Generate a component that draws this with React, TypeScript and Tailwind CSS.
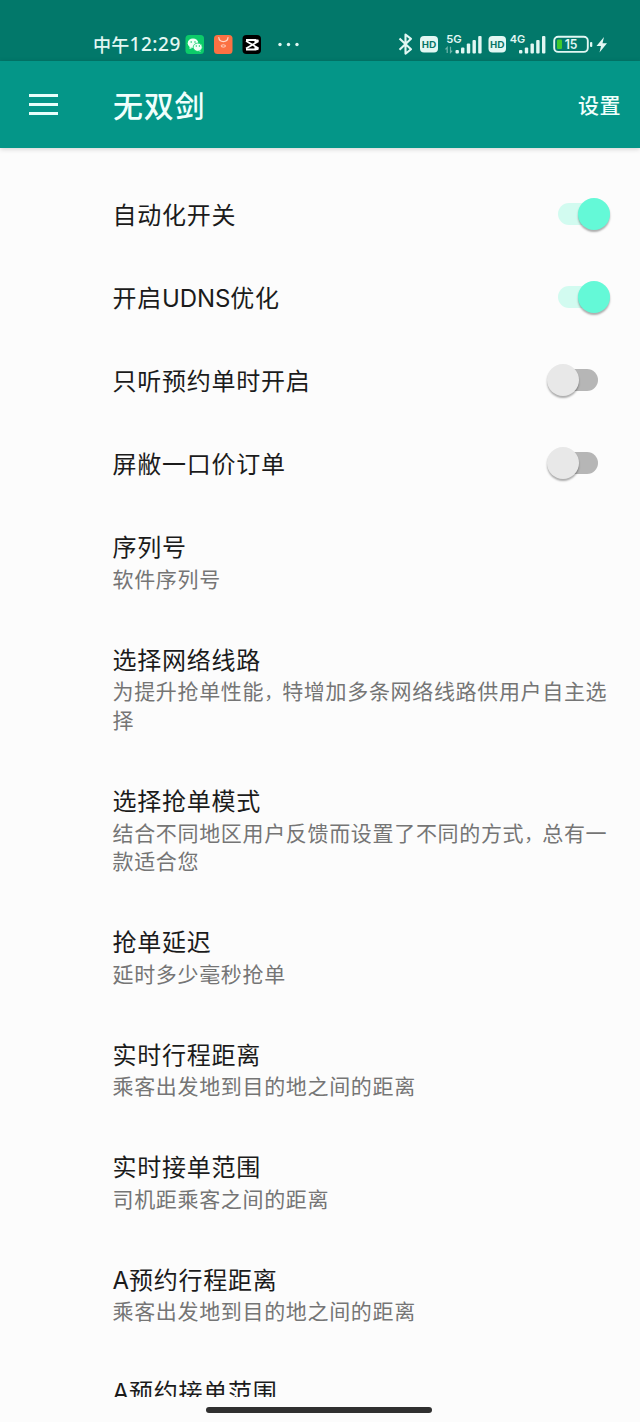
import React, { useState } from "react";

type Setting = { title: string; summary?: string; on?: boolean };

const settings: Setting[] = [
  { title: "自动化开关", on: true },
  { title: "开启UDNS优化", on: true },
  { title: "只听预约单时开启", on: false },
  { title: "屏敝一口价订单", on: false },
  { title: "序列号", summary: "软件序列号" },
  { title: "选择网络线路", summary: "为提升抢单性能，特增加多条网络线路供用户自主选择" },
  { title: "选择抢单模式", summary: "结合不同地区用户反馈而设置了不同的方式，总有一款适合您" },
  { title: "抢单延迟", summary: "延时多少毫秒抢单" },
  { title: "实时行程距离", summary: "乘客出发地到目的地之间的距离" },
  { title: "实时接单范围", summary: "司机距乘客之间的距离" },
  { title: "A预约行程距离", summary: "乘客出发地到目的地之间的距离" },
  { title: "A预约接单范围" },
];

function StatusIcons() {
  return (
    <svg width="214" height="28" viewBox="396 30 214 28" fill="none" aria-hidden="true">
      <path d="M399.5 38.5 411 49.3l-5.5 4.4V34.5l5.5 4.3-11.5 11" stroke="#e2f7f3" strokeWidth="2.1" strokeLinejoin="round" />
      <g fill="#e2f7f3">
        <rect x="420" y="36" width="18" height="16.5" rx="4" />
        <rect x="488.500" y="36" width="17.500" height="16.5" rx="4" />
        <rect x="455.500" y="50" width="3.400" height="3.500" rx="1" />
        <rect x="461" y="47.500" width="3.400" height="6" rx="1" />
        <rect x="466.800" y="43.500" width="3.400" height="10" rx="1" />
        <rect x="472.500" y="40" width="3.400" height="13.500" rx="1" />
        <rect x="478.200" y="36" width="3.400" height="17.500" rx="1" />
        <rect x="519" y="50" width="3.400" height="3.500" rx="1" />
        <rect x="524.800" y="47.500" width="3.400" height="6" rx="1" />
        <rect x="530.500" y="43.500" width="3.400" height="10" rx="1" />
        <rect x="536.200" y="40" width="3.400" height="13.500" rx="1" />
        <rect x="542" y="36" width="3.400" height="17.500" rx="1" />
        <rect x="590" y="42" width="2.300" height="5" rx="1" />
        <path d="m604 37-7.500 9h4.500l-1.500 6.500 7.500-9.300h-4.500Z" />
      </g>
      <g fill="#067365" fontFamily="Lato, sans-serif" fontWeight="900" fontSize="10">
        <text x="421.800" y="48" textLength="14.400" lengthAdjust="spacingAndGlyphs">HD</text>
        <text x="490.100" y="48" textLength="14.400" lengthAdjust="spacingAndGlyphs">HD</text>
      </g>
      <g fill="#e2f7f3" fontFamily="Inter, sans-serif" fontWeight="600" fontSize="11">
        <text x="446.300" y="43" textLength="15.500" lengthAdjust="spacingAndGlyphs">5G</text>
        <text x="509.700" y="43" textLength="15.500" lengthAdjust="spacingAndGlyphs">4G</text>
      </g>
      <path d="M447.200 53v-5.500l-1.700 1.800M450.500 46.800v5.700l1.700-1.800" stroke="#6fb5aa" strokeWidth="1.200" />
      <rect x="554.200" y="36.700" width="33.600" height="15.200" rx="4" stroke="#e2f7f3" strokeWidth="1.900" />
      <rect x="557" y="39.500" width="5" height="9.600" rx="1" fill="#3fc92c" />
      <text x="564.700" y="48.800" fill="#e2f7f3" fontFamily="Inter, sans-serif" fontWeight="600" fontSize="12.500" textLength="12.800" lengthAdjust="spacingAndGlyphs">15</text>
    </svg>
  );
}

function AppIcons() {
  return (
    <svg width="116" height="22" viewBox="185 33 116 22" fill="none" aria-hidden="true">
      <rect x="185.500" y="35" width="18.500" height="19" rx="3.500" fill="#0ccb69" />
      <path d="m189.500 49 .2-2.200 2.500 1.200ZM199 51.500l1.500.2-.2-1.700Z" fill="#effff6" />
      <ellipse cx="193" cy="43.200" rx="5.300" ry="4.800" fill="#effff6" />
      <ellipse cx="197.700" cy="47.200" rx="4.500" ry="4.100" fill="#effff6" stroke="#0ccb69" strokeWidth=".8" />
      <g fill="#0ccb69">
        <circle cx="191.200" cy="42" r=".8" /><circle cx="195" cy="42" r=".8" />
        <circle cx="196.300" cy="46" r=".7" /><circle cx="199.400" cy="46" r=".7" />
      </g>
      <rect x="214" y="35" width="18.500" height="19" rx="3.500" fill="#fb7143" />
      <path d="M218.800 37.500c.4 5.400 8.800 5.400 9.200 0" stroke="#ffd9c9" strokeWidth="1.200" strokeLinecap="round" />
      <path d="M220.800 45.500q2.500-1.500 5 0M221 46.500q2.400 1.300 4.700 0" stroke="#ffd9c9" strokeWidth=".9" />
      <rect x="242.500" y="35" width="18.500" height="19" rx="4" fill="#000" />
      <path d="M246 40h9.500v1.500l3-1.300M246 49.500h9.500v-1.500l3 1.300" stroke="#fff" strokeWidth="2" />
      <path d="m246 41 12.500 7.300M246 48.500l12.500-7.300" stroke="#fff" strokeWidth="1.700" />
      <g fill="#e2f7f3">
        <circle cx="280" cy="44.500" r="1.700" /><circle cx="288.500" cy="44.500" r="1.700" /><circle cx="297" cy="44.500" r="1.700" />
      </g>
    </svg>
  );
}

function Toggle({ initial, label }: { initial: boolean; label: string }) {
  const [on, setOn] = useState(initial);
  return (
    <button
      role="switch"
      aria-checked={on}
      aria-label={label}
      onClick={() => setOn(!on)}
      className={`flex h-8 w-[52px] items-center ${on ? "justify-end" : "-translate-x-3 justify-start"}`}
    >
      {on && <span className="-mr-5 h-[22px] w-10 rounded-full bg-[#d2fbf0]" />}
      <span
        className={`z-10 size-8 shrink-0 rounded-full shadow-[0_2px_2px_rgba(0,0,0,0.32)] ${on ? "bg-[#64f9d7]" : "ml-px bg-[#e8e8e8]"}`}
      />
      {!on && <span className="-ml-5 h-[22px] w-10 rounded-full bg-[#b6b6b6]" />}
    </button>
  );
}

function Title({ text }: { text: string }) {
  return (
    <h2 className="text-[24px] leading-[32.5px] tracking-[0.75px] text-[#1b1b1b]">
      {text.split(/([A-Z]+)/).map((part, i) =>
        i % 2 === 1 ? (
          <span key={i} className="font-['Inter'] leading-none tracking-[-0.1px]">{part}</span>
        ) : (
          part
        )
      )}
    </h2>
  );
}

function Summary({ text }: { text: string }) {
  const parts = text.split("，");
  return (
    <p className="mt-[1.25px] text-[21px] leading-[28.75px] tracking-[0.67px] text-[#757575]">
      {parts.map((part, i) => (
        <React.Fragment key={i}>
          {i > 0 && <span className="text-[18px] leading-none tracking-normal">，</span>}
          {part}
        </React.Fragment>
      ))}
    </p>
  );
}

export default function App() {
  return (
    <div className="flex h-[1422px] w-[640px] flex-col overflow-hidden bg-[#fcfcfc] font-['Noto_Sans_CJK_SC',sans-serif]">
      <div className="flex h-[61px] shrink-0 items-end bg-[#02786a] pl-[93px] text-[#e2f7f3]">
        <div className="flex h-[33px] w-[92px] items-center whitespace-nowrap text-[18px] font-medium tracking-[0.3px]">
          中午<span className="font-['Noto_Sans'] text-[19px] tracking-[0.5px]">12:29</span>
        </div>
        <div className="flex h-7"><AppIcons /></div>
        <div className="ml-auto mr-[30px] flex h-[31px]"><StatusIcons /></div>
      </div>
      <header className="z-10 flex h-[87px] shrink-0 items-center bg-[#049688] pr-[19px] text-[#f0fffc] shadow-[0_1px_5px_rgba(0,0,0,0.18)]">
        <button aria-label="菜单" className="ml-[29px] flex w-[84px] flex-col gap-[6px]">
          <span className="h-[3px] w-[29px] bg-[#e8fffb]" />
          <span className="h-[3px] w-[29px] bg-[#e8fffb]" />
          <span className="h-[3px] w-[29px] bg-[#e8fffb]" />
        </button>
        <h1 className="pb-0.5 text-[30px] font-medium leading-10 tracking-[0.7px]">无双剑</h1>
        <button className="ml-auto text-[21px] font-medium tracking-[0.5px]">设置</button>
      </header>
      <main className="h-[1249px] shrink-0 overflow-hidden pt-[25.6px]">
        {settings.map((item) => (
          <div
            key={item.title}
            className={`flex items-center pl-[112.5px] pr-[30px] pt-[24.5px] ${item.summary ? "pb-[25.5px]" : "pb-[26px]"}`}
          >
            <div className="flex-1">
              <Title text={item.title} />
              {item.summary && <Summary text={item.summary} />}
            </div>
            {item.on !== undefined && <Toggle initial={item.on} label={item.title} />}
          </div>
        ))}
      </main>
      <div className="ml-[206px] mt-[10px] h-[6px] w-[226px] shrink-0 rounded-full bg-[#303030]" />
    </div>
  );
}
